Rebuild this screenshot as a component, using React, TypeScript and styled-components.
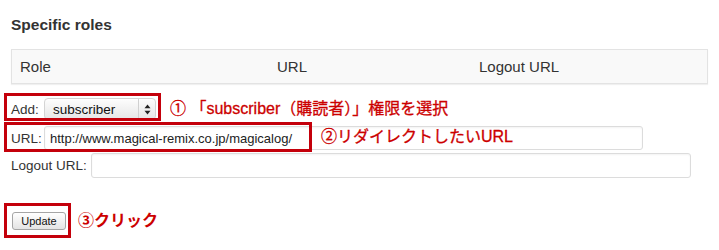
import * as React from "react";
import styled, { createGlobalStyle } from "styled-components";

const GlobalStyle = createGlobalStyle`
  body {
    margin: 0;
    background: #fff;
    font-family: "Liberation Sans", Arial, "Noto Sans CJK JP", sans-serif;
    color: #333;
  }
`;

const Page = styled.div`
  width: 719px;
  height: 250px;
  padding: 15px 11px 0 11px;
  box-sizing: border-box;
  position: relative;
`;

const Heading = styled.h3`
  margin: 0;
  font-size: 15.5px;
  font-weight: bold;
  color: #333;
  line-height: 20px;
`;

const TableHead = styled.div`
  margin-top: 14px;
  width: 697px;
  height: 35px;
  box-sizing: border-box;
  display: grid;
  grid-template-columns: 257px 202px 1fr;
  align-items: center;
  padding-left: 8px;
  background: #f9f9f9;
  border: 1px solid #e3e3e3;
  box-shadow: 0 1px 1px rgba(0, 0, 0, 0.06);
  font-size: 15px;
  color: #333;
`;

const Rows = styled.div`
  margin-top: 14px;
  display: flex;
  flex-direction: column;
`;

const Field = styled.div<{ $gap: number }>`
  position: relative;
  display: flex;
  align-items: center;
  margin-top: ${(p) => p.$gap}px;
`;

const Label = styled.span<{ $w: number }>`
  width: ${(p) => p.$w}px;
  font-size: 13.5px;
  color: #333;
  flex: none;
`;

const Select = styled.div`
  width: 112px;
  height: 22px;
  box-sizing: border-box;
  display: flex;
  align-items: center;
  border-radius: 4px;
  border: 1px solid #d4d4d4;
  background: linear-gradient(#fdfdfd, #e6e6e6);
  box-shadow: inset 0 1px 0 #fff;
  font-size: 13.5px;
  color: #111;
  padding-left: 8px;
`;

const SelectText = styled.span`
  flex: 1;
`;

const SelectArrows = styled.span`
  width: 16px;
  height: 20px;
  border-left: 1px solid #d0d0d0;
  display: flex;
  align-items: center;
  justify-content: center;
`;

const TextBox = styled.div<{ $w: number; $h: number }>`
  width: ${(p) => p.$w}px;
  height: ${(p) => p.$h}px;
  box-sizing: border-box;
  border: 1px solid #dcdcdc;
  border-radius: 3px;
  box-shadow: inset 0 1px 2px rgba(0, 0, 0, 0.05);
  background: #fff;
  display: flex;
  align-items: center;
  padding-left: 5px;
  font-size: 13px;
  color: #222;
`;

const Button = styled.button`
  width: 54px;
  height: 18px;
  padding: 0;
  margin-left: 1px;
  border: 1px solid #a5a5a5;
  border-radius: 3px;
  background: linear-gradient(#ffffff, #e4e4e4);
  font-family: "Liberation Sans", Arial, sans-serif;
  font-size: 11px;
  color: #111;
  line-height: 16px;
`;

const Mark = styled.div<{ $l: number; $t: number; $w: number; $h: number }>`
  position: absolute;
  left: ${(p) => p.$l}px;
  top: ${(p) => p.$t}px;
  width: ${(p) => p.$w}px;
  height: ${(p) => p.$h}px;
  box-sizing: border-box;
  border: 3px solid #c4000b;
  pointer-events: none;
`;

const Note = styled.span<{ $bold?: boolean; $left?: number }>`
  font-family: "Liberation Sans", "Noto Sans CJK JP", sans-serif;
  font-size: 16px;
  line-height: 20px;
  font-weight: ${(p) => (p.$bold ? 700 : 400)};
  -webkit-text-stroke: ${(p) => (p.$bold ? "0" : "0.3px")} #cc0000;
  color: #cc0000;
  white-space: nowrap;
  ${(p) =>
    p.$left !== undefined
      ? `position: absolute; left: ${p.$left}px; top: 1px;`
      : ""}
`;

const Arrows = () => (
  <svg width="7" height="11" viewBox="0 0 7 11">
    <path d="M3.5 0.5 L6.5 4.2 L0.5 4.2 Z" fill="#222" />
    <path d="M3.5 10.5 L6.5 6.8 L0.5 6.8 Z" fill="#222" />
  </svg>
);

const App: React.FC = () => (
  <Page>
    <GlobalStyle />
    <Heading>Specific roles</Heading>
    <TableHead>
      <span>Role</span>
      <span>URL</span>
      <span>Logout URL</span>
    </TableHead>
    <Rows>
      <Field $gap={0}>
        <Label $w={33}>Add:</Label>
        <Select>
          <SelectText>subscriber</SelectText>
          <SelectArrows>
            <Arrows />
          </SelectArrows>
        </Select>
        <Note style={{ marginLeft: 14 }}>① 「subscriber（購読者）」権限を選択</Note>
        <Mark $l={-7} $t={-5} $w={157} $h={28} />
      </Field>
      <Field $gap={6}>
        <Label $w={33}>URL:</Label>
        <TextBox $w={599} $h={24}>
          http://www.magical-remix.co.jp/magicalog/
        </TextBox>
        <Note $left={310}>②リダイレクトしたいURL</Note>
        <Mark $l={-7} $t={-4} $w={308} $h={30} />
      </Field>
      <Field $gap={3}>
        <Label $w={80}>Logout URL:</Label>
        <TextBox $w={600} $h={25} />
      </Field>
      <Field $gap={33}>
        <Button>Update</Button>
        <Note $bold style={{ marginLeft: 12 }}>
          ③クリック
        </Note>
        <Mark $l={-7} $t={-8} $w={67} $h={35} />
      </Field>
    </Rows>
  </Page>
);

export default App;
